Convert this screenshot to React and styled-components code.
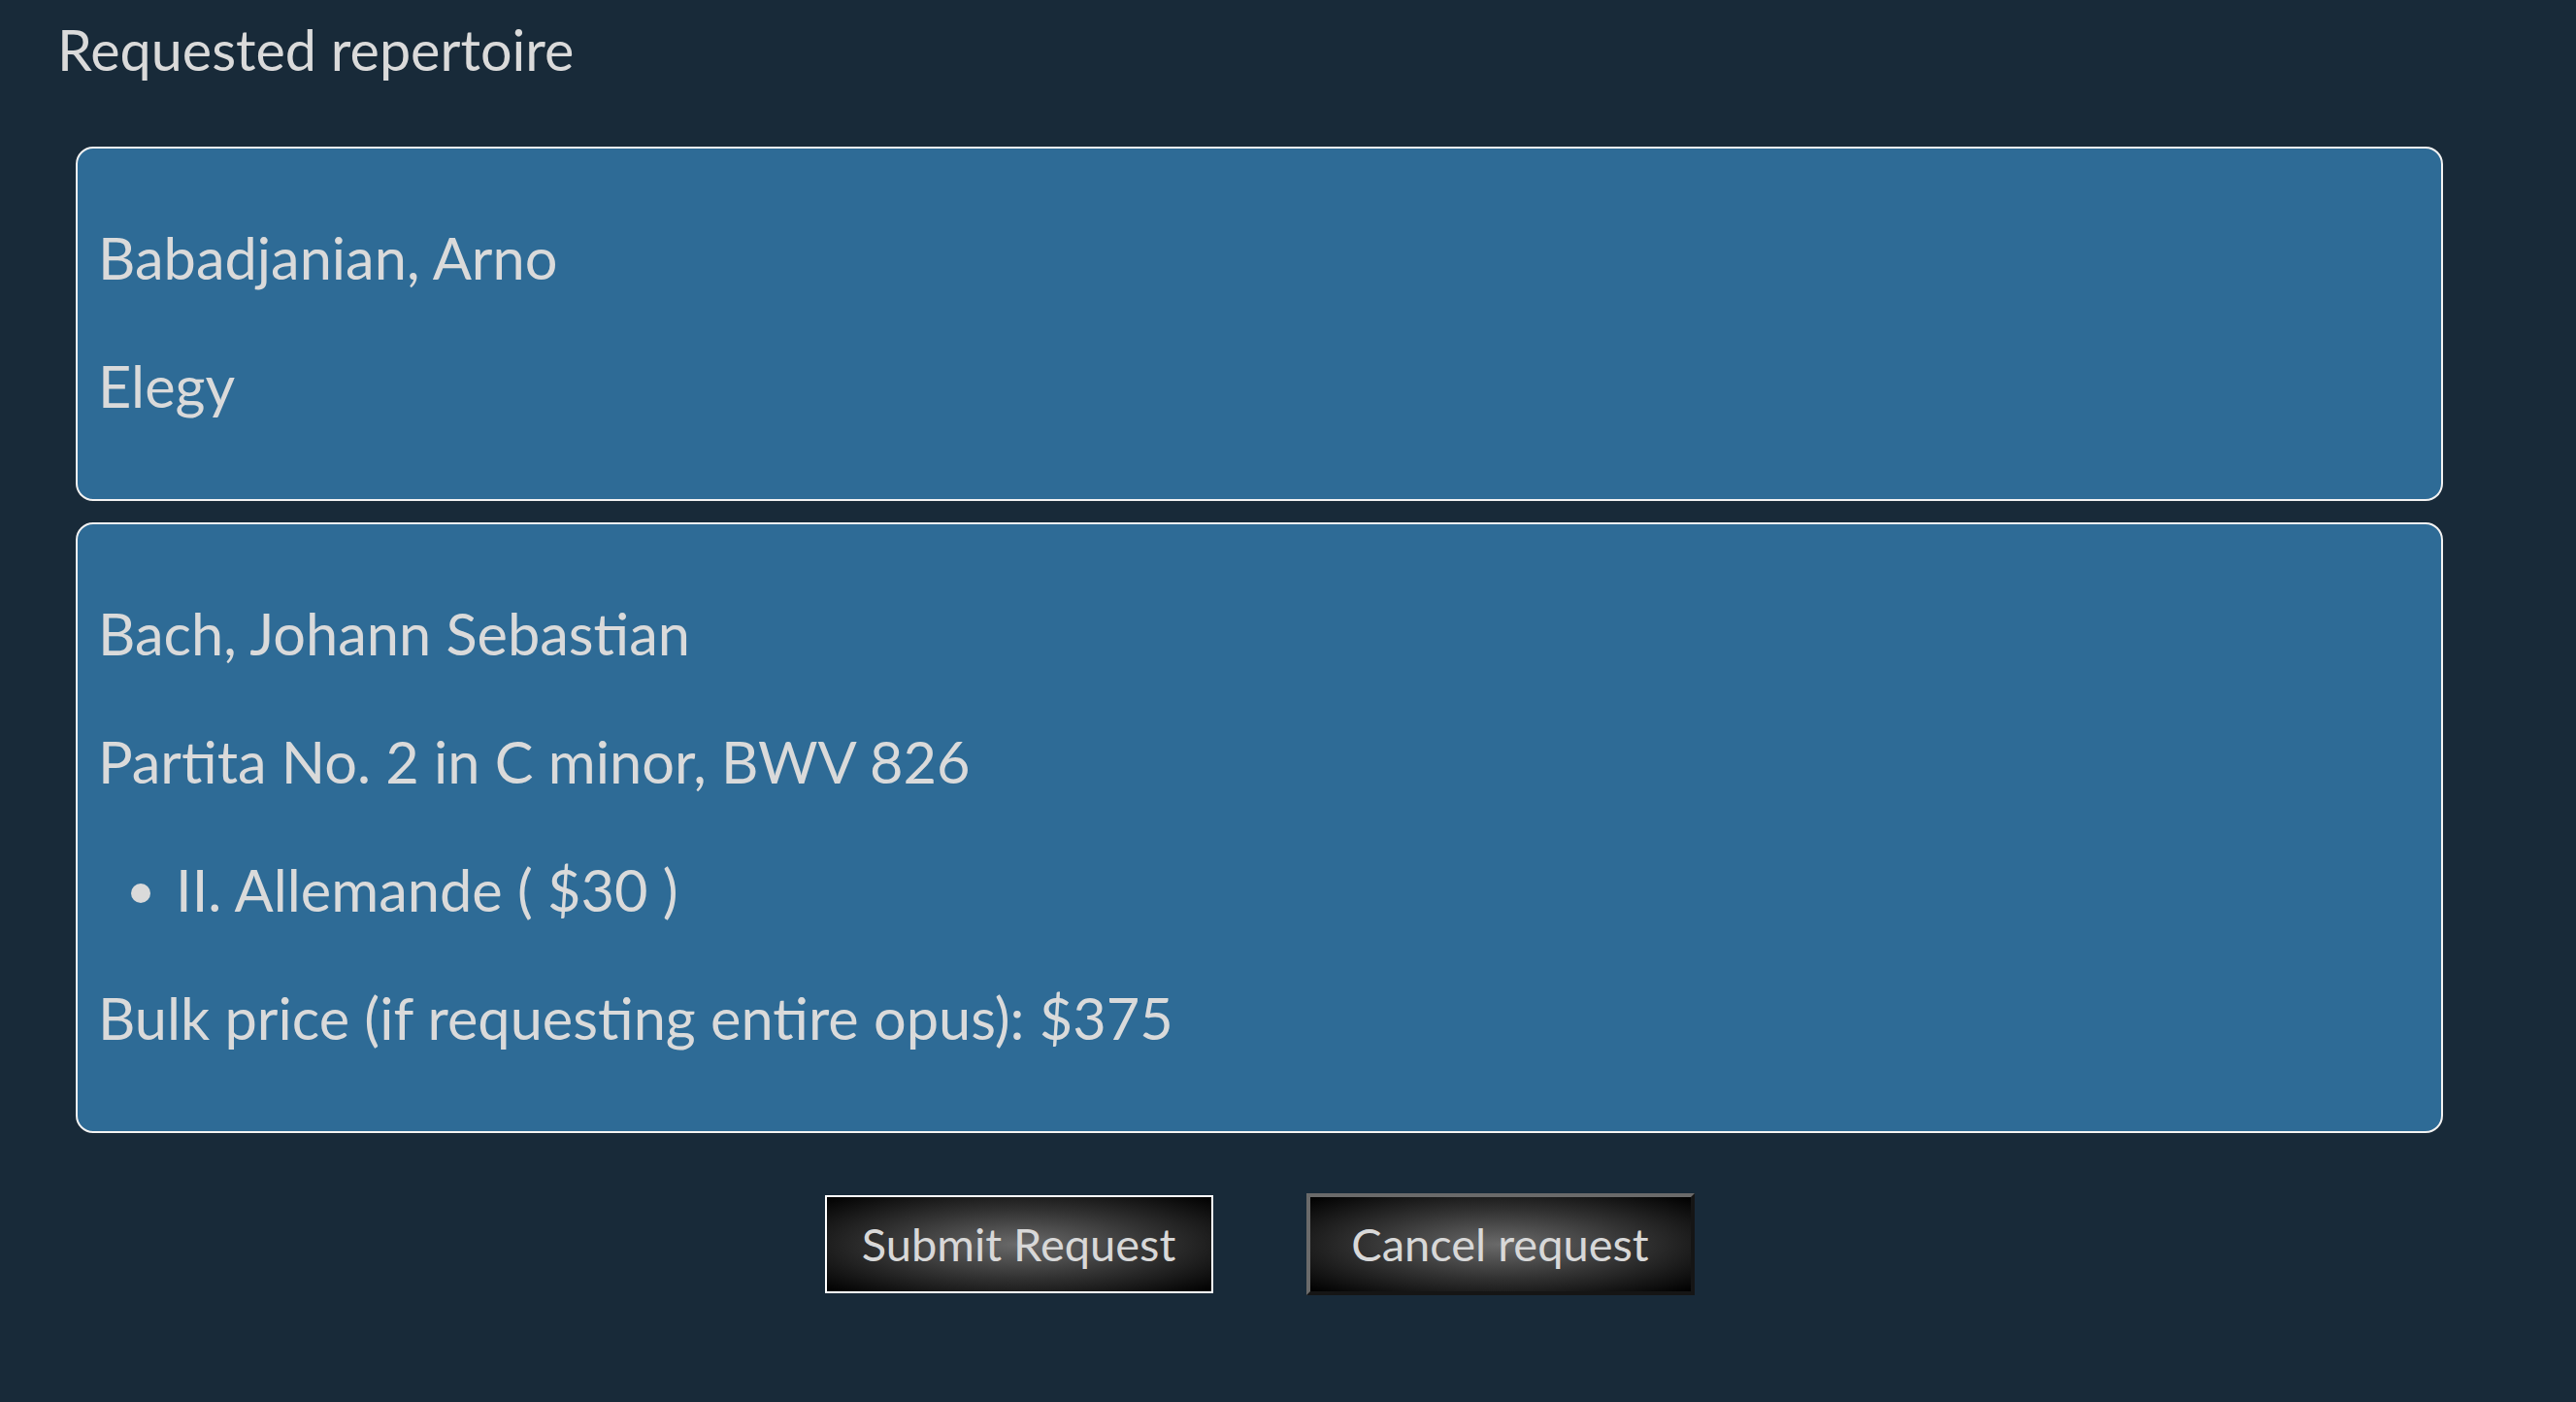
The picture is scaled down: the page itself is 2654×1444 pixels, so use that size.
import React from "react";
import styled, { createGlobalStyle } from "styled-components";

const GlobalStyle = createGlobalStyle`
  html, body {
    margin: 0;
    padding: 0;
    background: #182a39;
  }
  body {
    font-family: Lato, "Open Sans", sans-serif;
    color: #dadada;
  }
`;

const Page = styled.div`
  min-height: 1444px;
  padding: 16px 137px 40px 59px;
  box-sizing: border-box;
`;

const Title = styled.h2`
  margin: 0 0 65px;
  font-size: 57.5px;
  font-weight: 400;
  line-height: 70px;
`;

const CardList = styled.div`
  display: flex;
  flex-direction: column;
  gap: 22px;
  margin-left: 19px;
`;

const Card = styled.div`
  display: flex;
  flex-direction: column;
  gap: 62px;
  padding: 77px 21px 82px;
  background: #2e6b96;
  border: 2px solid #f2f2f2;
  border-radius: 18px;
`;

const Line = styled.p`
  margin: 0;
  font-size: 59.5px;
  line-height: 70px;
`;

const Movements = styled.ul`
  margin: 0;
  padding-left: 80px;
  font-size: 59.5px;
  line-height: 70px;
`;

const Actions = styled.div`
  display: flex;
  justify-content: center;
  align-items: center;
  gap: 96px;
  margin: 62px 0 0 19px;
`;

const Button = styled.button`
  width: 400px;
  height: ${(p) => (p.$cancel ? "105px" : "101px")};
  padding: 0 0 2px;
  font-family: Lato, "Open Sans", sans-serif;
  font-size: 47px;
  color: #d8d8d8;
  background: radial-gradient(ellipse at center, #6a6a6a 0%, #333 50%, #000 100%);
  border: ${(p) => (p.$cancel ? "4px outset #6a6a6a" : "2px solid #ffffff")};
  cursor: pointer;
`;

export default function App() {
  return (
    <>
      <GlobalStyle />
      <Page>
        <Title>Requested repertoire</Title>
        <CardList>
          <Card>
            <Line>Babadjanian, Arno</Line>
            <Line>Elegy</Line>
          </Card>
          <Card>
            <Line>Bach, Johann Sebastian</Line>
            <Line>Partita No. 2 in C minor, BWV 826</Line>
            <Movements>
              <li>II. Allemande ( $30 )</li>
            </Movements>
            <Line>Bulk price (if requesting entire opus): $375</Line>
          </Card>
        </CardList>
        <Actions>
          <Button>Submit Request</Button>
          <Button $cancel>Cancel request</Button>
        </Actions>
      </Page>
    </>
  );
}
